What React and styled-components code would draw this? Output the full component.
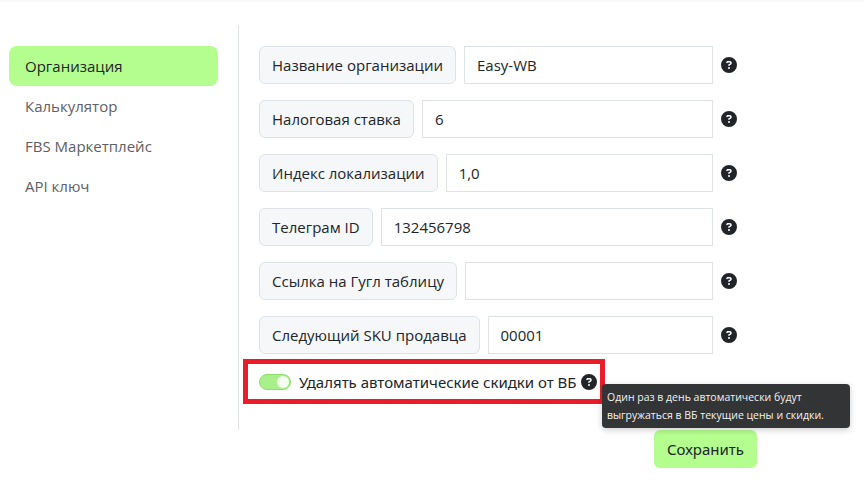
import React from "react";
import styled, { createGlobalStyle } from "styled-components";
import { FaCircleQuestion } from "react-icons/fa6";

const GlobalStyle = createGlobalStyle`
  html, body {
    margin: 0;
    background: #fff;
    font-family: "Open Sans", "Noto Sans", sans-serif;
    font-size: 15px;
    color: #212529;
  }
`;

const Page = styled.div`
  position: relative;
  width: 864px;
  height: 485px;
  overflow: hidden;
  border-top: 2px solid #f8f8f8;
  box-sizing: border-box;
`;

const Columns = styled.div`
  display: flex;
  padding: 23px 0 0 9px;
`;

const Sidebar = styled.nav`
  width: 209px;
  padding-top: 21px;
  display: flex;
  flex-direction: column;
`;

const NavItem = styled.div`
  height: 40px;
  display: flex;
  align-items: center;
  padding-left: 16px;
  border-radius: 8px;
  background: ${(p) => (p.$active ? "#b4fd8f" : "transparent")};
  color: ${(p) => (p.$active ? "#212529" : "#5c6064")};
`;

const Content = styled.div`
  margin-left: 20px;
  width: 520px;
  height: 405px;
  box-sizing: border-box;
  border-left: 1px solid #dfe1e3;
  padding: 21px 0 0 20px;
  display: flex;
  flex-direction: column;
  gap: 16px;
`;

const FieldRow = styled.div`
  display: flex;
  align-items: center;
  gap: 8px;
`;

const Group = styled.div`
  width: 454px;
  display: flex;
  gap: 8px;
`;

const Addon = styled.span`
  height: 38px;
  box-sizing: border-box;
  padding: 0 12px;
  display: flex;
  align-items: center;
  white-space: nowrap;
  background: #f6f7f8;
  border: 1px solid #dee2e6;
  border-radius: 6px;
`;

const Input = styled.input`
  flex: 1;
  min-width: 0;
  height: 38px;
  box-sizing: border-box;
  padding: 0 12px;
  font: inherit;
  color: #212529;
  background: #fff;
  border: 1px solid #dee2e6;
  outline: none;
`;

const HelpIcon = styled(FaCircleQuestion)`
  width: 16px;
  height: 16px;
  flex: none;
  color: #212529;
  margin-left: ${(p) => p.$offset || 0}px;
`;

const ToggleRow = styled.div`
  display: flex;
  align-items: center;
  height: 18px;
  margin-top: 3px;
  font-family: "Noto Sans", sans-serif;
`;

const Toggle = styled.span`
  position: relative;
  width: 32px;
  height: 16px;
  box-sizing: border-box;
  border-radius: 8px;
  background: #a8f08a;
  border: 1px solid #8ede6c;
  margin-right: 8px;

  &::after {
    content: "";
    position: absolute;
    top: 1px;
    right: 1px;
    width: 12px;
    height: 12px;
    border-radius: 50%;
    background: #f4fff0;
  }
`;

const Footer = styled.div`
  display: flex;
  padding-left: 654px;
`;

const SaveButton = styled.button`
  width: 103px;
  height: 38px;
  border: none;
  border-radius: 6px;
  background: #b4fd8f;
  color: #212529;
  font: 15px "Noto Sans", sans-serif;
  padding: 0;
`;

const Highlight = styled.div`
  position: absolute;
  left: 243px;
  top: 357px;
  width: 362px;
  height: 45px;
  box-sizing: border-box;
  border: 5px solid #ea1c2a;
  pointer-events: none;
`;

const Tooltip = styled.div`
  position: absolute;
  left: 602px;
  top: 382px;
  width: 248px;
  height: 44px;
  box-sizing: border-box;
  padding: 5px 5px 0;
  border-radius: 4px;
  background: #333436;
  color: #f2f2f2;
  font-size: 10.5px;
  line-height: 17.5px;
  box-shadow: 0 2px 6px rgba(0, 0, 0, 0.2);
`;

const fields = [
  { label: "Название организации", value: "Easy-WB" },
  { label: "Налоговая ставка", value: "6" },
  { label: "Индекс локализации", value: "1,0" },
  { label: "Телеграм ID", value: "132456798" },
  { label: "Ссылка на Гугл таблицу", value: "" },
  { label: "Следующий SKU продавца", value: "00001" },
];

const navItems = ["Организация", "Калькулятор", "FBS Маркетплейс", "API ключ"];

export default function App() {
  return (
    <Page>
      <GlobalStyle />
      <Columns>
        <Sidebar>
          {navItems.map((item, i) => (
            <NavItem key={item} $active={i === 0}>
              {item}
            </NavItem>
          ))}
        </Sidebar>
        <Content>
          {fields.map((f) => (
            <FieldRow key={f.label}>
              <Group>
                <Addon>{f.label}</Addon>
                <Input defaultValue={f.value} />
              </Group>
              <HelpIcon />
            </FieldRow>
          ))}
          <ToggleRow>
            <Toggle />
            Удалять автоматические скидки от ВБ
            <HelpIcon $offset={4} />
          </ToggleRow>
        </Content>
      </Columns>
      <Footer>
        <SaveButton>Сохранить</SaveButton>
      </Footer>
      <Highlight />
      <Tooltip>
        Один раз в день автоматически будут
        <br />
        выгружаться в ВБ текущие цены и скидки.
      </Tooltip>
    </Page>
  );
}
